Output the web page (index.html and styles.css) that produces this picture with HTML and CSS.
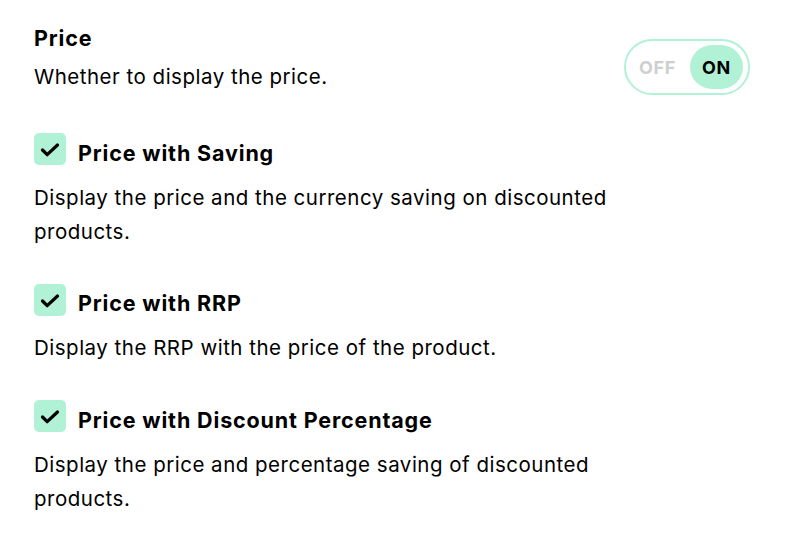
FILE: index.html
```html
<!DOCTYPE html>
<html lang="en">
<head>
<meta charset="utf-8">
<title>Price settings</title>
<link rel="stylesheet" href="styles.css">
</head>
<body>
<div class="panel">
  <div class="header">
    <div class="header-text">
      <h2 class="title">Price</h2>
      <p class="desc">Whether to display the price.</p>
    </div>
    <div class="toggle">
      <span class="toggle-off">OFF</span>
      <span class="toggle-on">ON</span>
    </div>
  </div>

  <div class="option">
    <div class="option-row">
      <span class="checkbox"><svg viewBox="0 0 32 32" width="32" height="32"><path d="M8.5 17 L13.2 21.7 L23.5 12" fill="none" stroke="#000" stroke-width="3.2" stroke-linecap="round" stroke-linejoin="round"/></svg></span>
      <span class="option-title">Price with Saving</span>
    </div>
    <p class="desc option-desc">Display the price and the currency saving on discounted products.</p>
  </div>

  <div class="option">
    <div class="option-row">
      <span class="checkbox"><svg viewBox="0 0 32 32" width="32" height="32"><path d="M8.5 17 L13.2 21.7 L23.5 12" fill="none" stroke="#000" stroke-width="3.2" stroke-linecap="round" stroke-linejoin="round"/></svg></span>
      <span class="option-title">Price with RRP</span>
    </div>
    <p class="desc option-desc">Display the RRP with the price of the product.</p>
  </div>

  <div class="option">
    <div class="option-row">
      <span class="checkbox"><svg viewBox="0 0 32 32" width="32" height="32"><path d="M8.5 17 L13.2 21.7 L23.5 12" fill="none" stroke="#000" stroke-width="3.2" stroke-linecap="round" stroke-linejoin="round"/></svg></span>
      <span class="option-title">Price with Discount Percentage</span>
    </div>
    <p class="desc option-desc">Display the price and percentage saving of discounted products.</p>
  </div>
</div>
</body>
</html>
```

FILE: styles.css
```css
* { box-sizing: border-box; }
html, body { margin: 0; padding: 0; background: #ffffff; }
body {
  font-family: "Inter", "Liberation Sans", sans-serif;
  color: #000;
}
.panel {
  width: 792px;
  padding: 26px 42px 0 34px;
}
.header {
  display: flex;
  justify-content: space-between;
  align-items: flex-start;
}
.title {
  margin: 0;
  font-size: 21.5px;
  line-height: 24px;
  font-weight: 700;
  letter-spacing: 0.85px;
}
.desc {
  margin: 10px 0 0;
  font-size: 20.5px;
  line-height: 34px;
  font-weight: 400;
  letter-spacing: 0.5px;
}
.toggle {
  margin-top: 13px;
  width: 126px;
  height: 56px;
  border: 2px solid #b1f2d6;
  border-radius: 28px;
  display: flex;
  align-items: center;
  justify-content: space-between;
  padding: 4px 5px 4px 13px;
}
.toggle-off {
  font-size: 18px;
  font-weight: 700;
  color: #cfcfcf;
  letter-spacing: 0.6px;
}
.toggle-on {
  width: 53px;
  height: 44px;
  border-radius: 22px;
  background: #b1f2d6;
  display: flex;
  align-items: center;
  justify-content: center;
  font-size: 18px;
  font-weight: 700;
  letter-spacing: 0.6px;
  color: #000;
}
.option { margin-top: 35px; }
.header + .option { margin-top: 38px; }
.option-row {
  display: flex;
  align-items: flex-start;
  gap: 12px;
}
.checkbox {
  width: 32px;
  height: 32px;
  border-radius: 5px;
  background: #b1f2d6;
  display: flex;
  flex: none;
}
.option-title {
  font-size: 21.5px;
  font-weight: 700;
  line-height: 32px;
  letter-spacing: 0.85px;
  margin-top: 3.5px;
}
.option-desc {
  margin-top: 12px;
  max-width: 600px;
}
```
